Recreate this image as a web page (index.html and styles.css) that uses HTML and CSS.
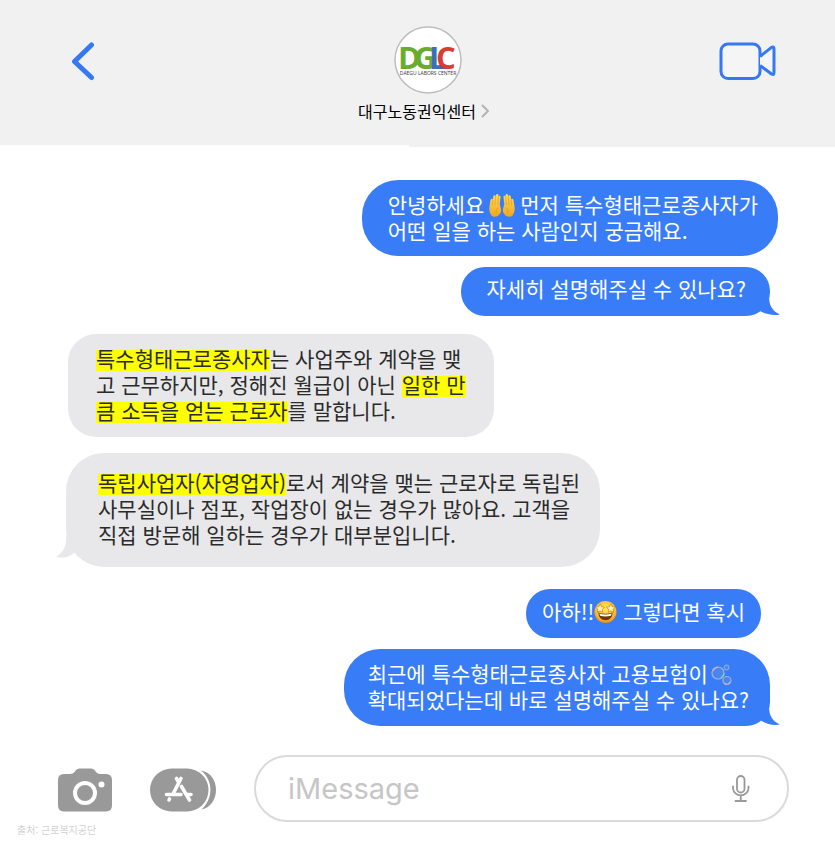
FILE: index.html
```html
<!DOCTYPE html>
<html lang="ko">
<head>
<meta charset="utf-8">
<meta name="viewport" content="width=device-width, initial-scale=1">
<title>대구노동권익센터</title>
<link rel="stylesheet" href="styles.css">
</head>
<body>
<header class="topbar">
  <button class="icon-button back" type="button" aria-label="뒤로">
    <svg width="24" height="40" viewBox="0 0 24 40"><path d="M20.500 4 3.500 20.500 20.500 36.500" fill="none" stroke="#3478f6" stroke-width="5" stroke-linecap="round" stroke-linejoin="round"/></svg>
  </button>
  <div class="contact">
    <svg class="avatar" width="68" height="68" viewBox="0 0 68 68" role="img" aria-label="DGLC Daegu Labors Center">
      <circle cx="34" cy="34" r="33" fill="#fff" stroke="#bdbdbd" stroke-width="1.500"/>
      <g class="logo-letters">
        <text x="4" y="43" fill="#6aad2d">D</text>
        <text x="20" y="43" fill="#6aad2d">G</text>
        <text x="35" y="43" fill="#3d6fb8">L</text>
        <text x="42" y="43" fill="#dc3c30">C</text>
      </g>
      <text class="logo-caption" x="34" y="49" text-anchor="middle">DAEGU LABORS CENTER</text>
    </svg>
    <a class="contact-name" href="#">대구노동권익센터
      <svg width="9" height="14" viewBox="0 0 9 14"><path d="M1.500 1.500 7 7 1.500 12.500" fill="none" stroke="#b4b4b6" stroke-width="2" stroke-linecap="round" stroke-linejoin="round"/></svg>
    </a>
  </div>
  <button class="icon-button video" type="button" aria-label="영상 통화">
    <svg width="58" height="40" viewBox="0 0 58 40"><g fill="#f5f5f5" stroke="#3478f6" stroke-width="3" stroke-linejoin="round"><rect x="2" y="3" width="39" height="34.500" rx="7"/><path d="M41 15.500 52.500 6.300Q55 5 55 8V31.500Q55 34.500 52.500 33L41 24.500"/></g></svg>
  </button>
</header>

<main class="chat">
  <section class="group sent">
    <p class="bubble wide">안녕하세요<svg class="emoji hands" viewBox="0 0 30 26" role="img" aria-label="두 손">
      <defs><linearGradient id="skin" x1="0" y1="0" x2="0" y2="1"><stop offset="0" stop-color="#ffdc5c"/><stop offset="1" stop-color="#f2a51d"/></linearGradient></defs>
      <g id="palm"><path d="M4 25C1.500 22 .8 18 1.500 14L2.600 7.500C3 5.700 5 6 5 7.800L5.600 3.600C6 1.800 8 2 8 3.800L8.700 2C9.300.6 11.200 1 11.100 2.800L11.200 3.500C12 2.300 13.600 2.900 13.400 4.700L12.500 12 13.800 17C14.700 20 13 23 10.500 25Q7 26.500 4 25Z" fill="url(#skin)"/><path d="M5 8 4.500 13M8 4 7.500 12.500M11.100 4 10.400 12.500M10.500 16Q8 17 8.500 21" fill="none" stroke="#dc8c12" stroke-width=".6" stroke-linecap="round"/></g>
      <use href="#palm" transform="translate(30 0) scale(-1 1)"/>
    </svg>먼저 특수형태근로종사자가<br>어떤 일을 하는 사람인지 궁금해요.</p>
    <p class="bubble short tailed">자세히 설명해주실 수 있나요?<svg class="tail" width="24" height="20" viewBox="0 0 24 20"><path d="M12 0C12 9 15 15 23 18.500 16 20 8 18 3 15L0 8Z"/></svg></p>
  </section>

  <section class="group received">
    <p class="bubble definition"><mark>특수형태근로종사자</mark>는 사업주와 계약을 맺<br>고 근무하지만, 정해진 월급이 아닌 <mark>일한 만<br>큼 소득을 얻는 근로자</mark>를 말합니다.</p>
    <p class="bubble detail tailed"><mark>독립사업자(자영업자)</mark>로서 계약을 맺는 근로자로 독립된<br>사무실이나 점포, 작업장이 없는 경우가 많아요. 고객을<br>직접 방문해 일하는 경우가 대부분입니다.<svg class="tail" width="24" height="24" viewBox="0 0 24 24"><path d="M10 0C11 10 8 17 0 22 8 24 15 21 19 17L24 8Z"/></svg></p>
  </section>

  <section class="group sent">
    <p class="bubble reply">아하!!<svg class="emoji star" viewBox="0 0 24 24" role="img" aria-label="반한 얼굴">
      <defs><radialGradient id="face" cx=".5" cy=".35" r=".7"><stop offset="0" stop-color="#ffe75a"/><stop offset=".7" stop-color="#fbb829"/><stop offset="1" stop-color="#df7c0d"/></radialGradient></defs>
      <circle cx="12" cy="12" r="11.500" fill="url(#face)"/>
      <path d="M4.500 12.500Q12 15 19.500 12.500 19 20.500 12 20.500T4.500 12.500Z" fill="#71370b"/><path d="M5.500 13.500Q12 15.500 18.500 13.500L17.700 16Q12 17.400 6.300 16Z" fill="#fff"/>
      <g fill="#fff3aa" stroke="#b96b13" stroke-width=".6"><path id="eye" d="M6.500 3.500 7.900 6.500 11 7 8.800 9.200 9.200 12.300 6.400 10.800 3.500 12.300 4 9 1.500 6.900 5 6.400Z"/><use href="#eye" transform="translate(24 0) scale(-1 1)"/></g>
    </svg> 그렇다면 혹시</p>
    <p class="bubble question tailed">최근에 특수형태근로종사자 고용보험이<svg class="emoji bubbles" viewBox="0 0 26 24" role="img" aria-label="비눗방울">
      <g fill="#4b86ec" stroke-width="1.200"><circle cx="10" cy="11" r="6" stroke="#9eb1d6"/><circle cx="18.500" cy="5.500" r="2.300" stroke="#7ea8ec"/><circle cx="19" cy="18.500" r="4" stroke="#9eb1d6"/></g>
      <path d="M5 9Q6.500 5.500 10 5" fill="none" stroke="#d3aac9" stroke-width="1.200"/><path d="M13 16Q16 14 16 11" fill="none" stroke="#7fc9d0" stroke-width="1.200"/><path d="M16 21Q19 24 22 20" fill="none" stroke="#cbb2c6" stroke-width="1.200"/>
    </svg><br>확대되었다는데 바로 설명해주실 수 있나요?<svg class="tail" width="24" height="20" viewBox="0 0 24 20"><path d="M12 0C12 9 15 15 23 18.500 14 20 7 17 0 12L0 4Z"/></svg></p>
  </section>
</main>

<footer class="footer">
  <form class="composer">
    <button class="icon-button" type="button" aria-label="카메라">
      <svg width="54" height="44" viewBox="0 0 54 44"><path d="M6 6H12Q15 6 16.500 4L18 2Q19.300.5 21.500.5H33Q35 .5 36.500 2L38 4Q39.500 6 42 6H48Q54 6 54 12V37Q54 43.500 48 43.500H6Q0 43.500 0 37V12Q0 6 6 6Z" fill="#999"/><circle cx="27" cy="25" r="10" fill="none" stroke="#fff" stroke-width="4"/><circle cx="43.500" cy="16.500" r="3" fill="#fff"/></svg>
    </button>
    <button class="icon-button" type="button" aria-label="앱">
      <svg width="66" height="44" viewBox="0 0 66 44"><path d="M21.500.5H37A21.500 21.500 0 0 1 37 43.500H21.500A21.500 21.500 0 0 1 21.500.5Z" fill="#999"/><path d="M51 2.500C61 4 66 13 66 22S61 39.500 51.500 41.500C63.500 31 63.500 12 51 2.500Z" fill="#999"/><g fill="none" stroke="#fff" stroke-width="3.600" stroke-linecap="round"><path d="M31 10.500 23.500 25M26.500 10.500 28.500 14M31.500 18.500 39.500 32M16.500 26.500H31M36.500 26.500H41M19.500 31 19 32"/></g></svg>
    </button>
    <label class="field">
      <input type="text" placeholder="iMessage" aria-label="iMessage">
      <svg width="20" height="28" viewBox="0 0 20 28"><g fill="none" stroke="#999" stroke-width="1.800" stroke-linecap="round"><rect x="6" y="1" width="7.500" height="16.500" rx="3.750"/><path d="M2 11.500V13.500A7.800 7.800 0 0 0 17.500 13.500V11.500M9.750 21.500V26M4.500 26H15"/></g></svg>
    </label>
  </form>
  <small class="source">출처: 근로복지공단</small>
</footer>
</body>
</html>
```
FILE: styles.css
```css
* {
  box-sizing: border-box;
}

body {
  margin: 0;
  background: #fff;
  color: #2b2b2b;
  font-family: "Noto Sans CJK KR", sans-serif;
}

svg {
  display: block;
}

.icon-button {
  padding: 0;
  border: 0;
  background: none;
}

/* Header */
.topbar {
  position: relative;
  display: grid;
  grid-template-columns: 1fr auto 1fr;
  align-items: start;
  padding: 26px 58px 24px 71px;
  background: #f1f1f1;
}

.topbar::after {
  content: "";
  position: absolute;
  left: 0;
  bottom: 0;
  width: 49%;
  height: 2px;
  background: #fff;
}

.back,
.video {
  margin-top: 15px;
}

.back {
  justify-self: start;
}

.video {
  justify-self: end;
}

.contact {
  display: flex;
  flex-direction: column;
  align-items: center;
  gap: 5px;
}

.avatar {
  margin-left: 8px;
}

.logo-letters {
  font: 700 31px "Open Sans", sans-serif;
}

.logo-caption {
  font: 5px "Open Sans", sans-serif;
  fill: #333;
}

.contact-name {
  display: flex;
  align-items: center;
  gap: 5px;
  color: #000;
  font-size: 16px;
  line-height: 24px;
  text-decoration: none;
}

/* Conversation */
.chat {
  display: flex;
  flex-direction: column;
  gap: 18px;
  padding: 33px 65px 29px;
}

.group {
  display: flex;
  flex-direction: column;
}

.sent {
  align-items: flex-end;
  gap: 11px;
}

.received {
  align-items: flex-start;
  gap: 16px;
  padding-bottom: 4px;
}

.bubble {
  position: relative;
  margin: 0;
  padding: 11px 24px 13px;
  border-radius: 36px;
  font-size: 21px;
  line-height: 26px;
}

.sent .bubble {
  background: #387df7;
  color: #fff;
}

.received .bubble {
  background: #e8e8ea;
}

.wide {
  margin-right: -8px;
  padding: 11px 20px 13px 26px;
}

.short {
  padding: 8px 24px 15px 26px;
  border-radius: 24px;
}

.definition {
  margin-left: 3px;
  padding: 11px 28px 14px;
  border-radius: 28px;
}

.detail {
  margin-left: 1px;
  padding: 16px 20px 20px 32px;
  border-radius: 38px;
}

.reply {
  margin-right: 9px;
  padding: 9px 16px 14px;
  border-radius: 24px;
}

.question {
  padding: 11px 21px 14px 24px;
  border-bottom-right-radius: 24px;
}

mark {
  background: linear-gradient(#ff0, #ff0) 0 7px / 100% 21px no-repeat;
  color: inherit;
  -webkit-box-decoration-break: clone;
  box-decoration-break: clone;
}

.tail {
  position: absolute;
  bottom: 0;
}

.sent .tail {
  right: -11px;
  fill: #387df7;
}

.received .tail {
  bottom: 8px;
  left: -10px;
  fill: #e8e8ea;
}

.emoji {
  display: inline-block;
  height: 24px;
  vertical-align: -4px;
}

.hands {
  width: 28px;
  margin: 0 4px;
}

.star {
  width: 23px;
}

.bubbles {
  width: 26px;
}

/* Composer */
.footer {
  padding: 0 46px 0 17px;
}

.composer {
  display: flex;
  align-items: center;
  gap: 38px;
  padding-left: 41px;
}

.composer .icon-button {
  flex: none;
  margin-top: 3px;
}

.field {
  display: flex;
  flex: 1;
  align-items: center;
  min-width: 0;
  height: 67px;
  padding: 0 36px 0 32px;
  border: 2px solid #dadada;
  border-radius: 34px;
}

.field input {
  flex: 1;
  min-width: 0;
  padding: 0;
  border: 0;
  outline: 0;
  background: none;
  font: 29px Inter, sans-serif;
}

.field input::placeholder {
  color: #c6c6c6;
  opacity: 1;
}

.source {
  display: block;
  color: #d2d2d2;
  font-size: 10px;
  line-height: 16px;
}
```
